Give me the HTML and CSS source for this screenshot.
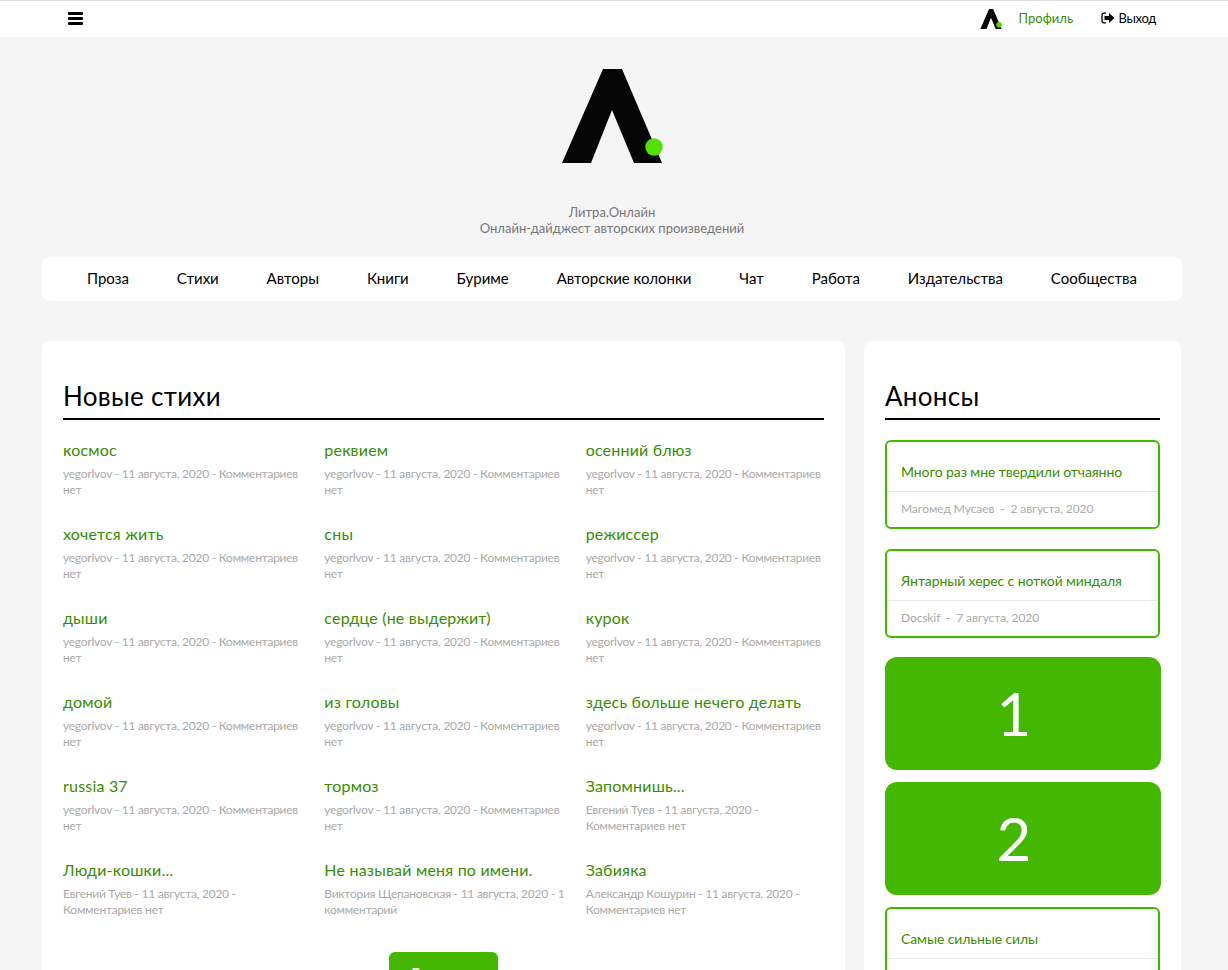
FILE: index.html
```html
<!DOCTYPE html>
<html lang="ru">
<head>
<meta charset="utf-8">
<title>Литра.Онлайн</title>
<link rel="stylesheet" href="styles.css">
</head>
<body>
<div class="page">
<header class="topbar">
  <button class="burger" aria-label="Меню"><span></span><span></span><span></span></button>
  <div class="topbar-right">
    <svg class="mini-logo" viewBox="0 0 100 94"><path d="M41 0H60L100 94H72L50 41L29 94H0Z" fill="#050505"/><circle cx="88" cy="74" r="13" fill="#52d800"/></svg>
    <a class="profile" href="#">Профиль</a>
    <a class="logout" href="#"><svg class="exit" viewBox="0 0 14 12"><path d="M5 1.2H3A2 2 0 0 0 1 3.2V8.800A2 2 0 0 0 3 10.800H5" fill="none" stroke="#000" stroke-width="1.300"/><path d="M8 1L13.500 6L8 11V8H3.500V4H8Z" fill="#000"/></svg>Выход</a>
  </div>
</header>

<div class="brand">
  <svg class="logo" viewBox="0 0 101 94"><path d="M41 0H60L100 94H72L50 41L29 94H0Z" fill="#050505"/><circle cx="92" cy="78" r="8.700" fill="#52e000"/></svg>
  <p class="tagline">Литра.Онлайн<br>Онлайн-дайджест авторских произведений</p>
</div>

<nav class="nav">
  <a href="#">Проза</a><a href="#">Стихи</a><a href="#">Авторы</a><a href="#">Книги</a><a href="#">Буриме</a><a href="#">Авторские колонки</a><a href="#">Чат</a><a href="#">Работа</a><a href="#">Издательства</a><a href="#">Сообщества</a>
</nav>

<div class="columns">
  <main class="card main-card">
    <h2 class="heading">Новые стихи</h2>
    <div class="poems">
      <article class="poem"><a href="#">космос</a><p>yegorlvov - 11 августа, 2020 - Комментариев нет</p></article>
      <article class="poem"><a href="#">реквием</a><p>yegorlvov - 11 августа, 2020 - Комментариев нет</p></article>
      <article class="poem"><a href="#">осенний блюз</a><p>yegorlvov - 11 августа, 2020 - Комментариев нет</p></article>
      <article class="poem"><a href="#">хочется жить</a><p>yegorlvov - 11 августа, 2020 - Комментариев нет</p></article>
      <article class="poem"><a href="#">сны</a><p>yegorlvov - 11 августа, 2020 - Комментариев нет</p></article>
      <article class="poem"><a href="#">режиссер</a><p>yegorlvov - 11 августа, 2020 - Комментариев нет</p></article>
      <article class="poem"><a href="#">дыши</a><p>yegorlvov - 11 августа, 2020 - Комментариев нет</p></article>
      <article class="poem"><a href="#">сердце (не выдержит)</a><p>yegorlvov - 11 августа, 2020 - Комментариев нет</p></article>
      <article class="poem"><a href="#">курок</a><p>yegorlvov - 11 августа, 2020 - Комментариев нет</p></article>
      <article class="poem"><a href="#">домой</a><p>yegorlvov - 11 августа, 2020 - Комментариев нет</p></article>
      <article class="poem"><a href="#">из головы</a><p>yegorlvov - 11 августа, 2020 - Комментариев нет</p></article>
      <article class="poem"><a href="#">здесь больше нечего делать</a><p>yegorlvov - 11 августа, 2020 - Комментариев нет</p></article>
      <article class="poem"><a href="#">russia 37</a><p>yegorlvov - 11 августа, 2020 - Комментариев нет</p></article>
      <article class="poem"><a href="#">тормоз</a><p>yegorlvov - 11 августа, 2020 - Комментариев нет</p></article>
      <article class="poem"><a href="#">Запомнишь...</a><p>Евгений Туев - 11 августа, 2020 - Комментариев нет</p></article>
      <article class="poem"><a href="#">Люди-кошки...</a><p>Евгений Туев - 11 августа, 2020 - Комментариев нет</p></article>
      <article class="poem"><a href="#">Не называй меня по имени.</a><p>Виктория Щепановская - 11 августа, 2020 - 1 комментарий</p></article>
      <article class="poem"><a href="#">Забияка</a><p>Александр Кошурин - 11 августа, 2020 - Комментариев нет</p></article>
    </div>
    <div class="more"><a class="more-btn" href="#">Все стихи</a></div>
  </main>

  <aside class="card side-card">
    <h2 class="heading">Анонсы</h2>
    <div class="side-list">
      <div class="notice"><a href="#">Много раз мне твердили отчаянно</a><p>Магомед Мусаев &nbsp;-&nbsp; 2 августа, 2020</p></div>
      <div class="notice"><a href="#">Янтарный херес с ноткой миндаля</a><p>Docskif &nbsp;-&nbsp; 7 августа, 2020</p></div>
      <div class="ad">1</div>
      <div class="ad">2</div>
      <div class="notice"><a href="#">Самые сильные силы</a></div>
    </div>
  </aside>
</div>
</div>
</body>
</html>
```
FILE: styles.css
```css
* { box-sizing: border-box; }
html, body { margin: 0; height: 970px; overflow: hidden; }
body { background: #f5f5f5; font-family: Lato, "Noto Sans", sans-serif; color: #000; }
a { text-decoration: none; color: inherit; }
p { margin: 0; }

.topbar {
  height: 37px;
  background: #fff;
  border-top: 1px solid #ddd;
  display: flex;
  justify-content: space-between;
  align-items: center;
  padding: 0 72px 2px 68px;
}
.burger {
  width: 15px; height: 13px; padding: 0; border: 0; background: none;
  display: flex; flex-direction: column; justify-content: space-between;
}
.burger span { display: block; height: 3px; background: #000; border-radius: 1px; }
.topbar-right { display: flex; align-items: center; font-size: 13px; }
.mini-logo { width: 22px; height: 20px; margin-right: 17px; margin-top: 2px; }
.profile { color: #388e00; width: 82px; }
.logout { display: flex; align-items: center; gap: 4px; letter-spacing: -0.3px; }
.exit { width: 14px; height: 12px; }

.brand { display: flex; flex-direction: column; align-items: center; padding-top: 32px; }
.logo { width: 101px; height: 94px; margin-right: 3px; display: block; }
.tagline { margin: 41px 4px 0 0; text-align: center; font-size: 13px; line-height: 16px; color: #777; letter-spacing: 0.03px; }

.nav {
  margin: 21px 46px 0 42px;
  height: 44px;
  background: #fff;
  border-radius: 8px;
  display: flex;
  align-items: center;
  justify-content: space-between;
  padding: 0 45px 2px;
  font-size: 15px;
}

.columns { display: flex; align-items: flex-start; gap: 19px; margin: 40px 47px 0 42px; }
.card { background: #fff; border-radius: 8px; padding: 40px 21px 30px; }
.main-card { width: 803px; }
.side-card { width: 317px; }
.heading {
  margin: 0;
  height: 39px;
  font-size: 26px;
  line-height: 30px;
  font-weight: 400;
  letter-spacing: 0.3px;
  border-bottom: 2px solid #000;
}
.poems { display: grid; grid-template-columns: repeat(3, 1fr); column-gap: 23px; margin-top: 20px; }
.poem { height: 84px; }
.poem a { display: block; color: #388e00; font-size: 16px; line-height: 20px; letter-spacing: 0.2px; }
.poem p { margin: 6px -4px 0 0; font-size: 12px; line-height: 16px; color: #aaa; letter-spacing: -0.25px; }
.more { display: flex; justify-content: center; margin-top: 8px; }
.more-btn {
  width: 109px; height: 40px; background: #44b700; border-radius: 6px;
  color: #fff; font-size: 14px; font-weight: 700;
  display: flex; align-items: center; justify-content: center;
}

.side-list { display: flex; flex-direction: column; margin-top: 20px; width: 276px; }
.notice {
  width: 275px;
  height: 89px;
  border: 2px solid #44b700;
  border-radius: 6px;
  margin-bottom: 20px;
}
.notice a {
  display: flex; align-items: flex-end;
  height: 50px;
  padding: 0 14px 10px;
  font-size: 14px;
  line-height: 18px;
  color: #388e00;
  letter-spacing: -0.1px;
  border-bottom: 1px solid #e6e6e6;
}
.notice p { padding: 9px 14px 0; font-size: 12px; line-height: 16px; color: #aaa; letter-spacing: -0.1px; }
.ad {
  height: 113px;
  padding-right: 18px;
  background: #44b700;
  border-radius: 12px;
  color: #fff;
  font-size: 60px;
  line-height: 113px;
  text-align: center;
  margin-bottom: 12px;
  margin-top: -1px;
}
.ad + .ad { margin-top: 0; }
```
